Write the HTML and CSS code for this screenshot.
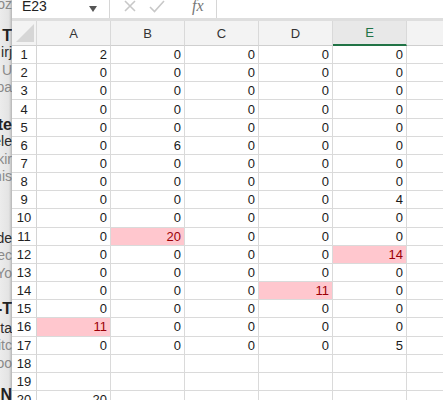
FILE: index.html
```html
<!DOCTYPE html>
<html>
<head>
<meta charset="utf-8">
<link rel="stylesheet" href="styles.css">
</head>
<body>
<div class="page">
  <div class="behind">
    <div class="bl gray first">oz</div>
    <div class="bl bold m13">T</div>
    <div class="bl">irj</div>
    <div class="bl gray">l U</div>
    <div class="bl gray">pa</div>
    <div class="bl bold m19">ste</div>
    <div class="bl">ele</div>
    <div class="bl gray">kir</div>
    <div class="bl gray">nis</div>
    <div class="bl m44">de</div>
    <div class="bl gray">tec</div>
    <div class="bl gray">Yo</div>
    <div class="bl bold m18">-T</div>
    <div class="bl m2">ta</div>
    <div class="bl gray">itc</div>
    <div class="bl gray">oo</div>
    <div class="bl bold m14">N</div>
  </div>
  <div class="window">
    <div class="fbar">
      <div class="namebox">
        <span class="name">E23</span>
        <svg class="caret" width="8" height="6" viewBox="0 0 8 6"><path d="M0 0h8L4 6z" fill="#555"/></svg>
      </div>
      <div class="fbtns">
        <svg width="14" height="13" viewBox="0 0 14 13"><path d="M2 1l10 10M12 1L2 11" stroke="#c8c8c8" stroke-width="1.6" fill="none"/></svg>
        <svg width="16" height="13" viewBox="0 0 16 13"><path d="M1 7l4.5 4.5L15 1" stroke="#c8c8c8" stroke-width="1.6" fill="none"/></svg>
        <span class="fx">fx</span>
      </div>
      <div class="finput"></div>
    </div>
    <div class="sheet" id="sheet">
      <div class="hd corner"><svg width="20" height="20" viewBox="0 0 20 20"><path d="M19 1V19H1z" fill="#d6d6d6"/></svg></div>
      <div class="hd">A</div>
      <div class="hd">B</div>
      <div class="hd">C</div>
      <div class="hd">D</div>
      <div class="hd sel">E</div>
      <div class="hd blank"></div>
    </div>
  </div>
</div>
<script src="app.js"></script>
</body>
</html>
```
FILE: styles.css
```css
html, body {
  margin: 0;
  padding: 0;
  background: #fff;
  overflow: hidden;
}
.page {
  display: flex;
  width: 443px;
  height: 400px;
  overflow: hidden;
  font-family: "Liberation Sans", Arial, sans-serif;
}
.behind {
  width: 12px;
  flex: none;
  overflow: hidden;
  background: linear-gradient(to right, #ececec 0%, #e4e4e4 70%, #cfcfcf 100%);
  display: flex;
  flex-direction: column;
  font-size: 14px;
  color: #2a2a2a;
}
.bl {
  height: 17.5px;
  line-height: 17.5px;
  display: flex;
  justify-content: flex-end;
  white-space: nowrap;
  flex: none;
}
.bl.gray { color: #8a8a8a; }
.bl.bold { font-weight: bold; font-size: 16px; color: #222; }
.first { margin-top: -4px; }
.m13 { margin-top: 13px; }
.m19 { margin-top: 19px; }
.m44 { margin-top: 44px; }
.m18 { margin-top: 18px; }
.m14 { margin-top: 14px; }
.m2 { margin-top: 2px; }

.window {
  flex: 1;
  display: flex;
  flex-direction: column;
  box-shadow: -1px 0 2px rgba(0,0,0,0.15);
  position: relative;
}
.fbar {
  flex: none;
  height: 18px;
  display: flex;
  border-bottom: 3px solid #dedede;
  background: #fff;
}
.namebox {
  width: 98px;
  display: flex;
  align-items: center;
  justify-content: space-between;
  padding: 0 12px 0 10px;
  box-sizing: border-box;
  border-right: 1px solid #d6d6d6;
}
.name {
  font-size: 14px;
  color: #222;
  line-height: 14px;
  margin-top: -6px;
}
.caret { margin-top: -1px; }
.fbtns {
  width: 107px;
  display: flex;
  align-items: center;
  padding-left: 13px;
  gap: 12px;
  box-sizing: border-box;
  border-right: 1px solid #d6d6d6;
}
.fbtns svg { margin-top: -5px; }
.fx {
  font-family: "Liberation Serif", "Times New Roman", serif;
  font-style: italic;
  font-size: 16px;
  color: #777;
  margin-left: 15px;
  margin-top: -6px;
}
.finput { flex: 1; }

.sheet {
  flex: none;
  display: grid;
  grid-template-columns: 25px repeat(5, 74px) 1fr;
  grid-template-rows: 25px;
  grid-auto-rows: 18.17px;
  font-size: 13px;
  color: #1a1a1a;
}
.hd {
  background: #f3f3f3;
  border-right: 1px solid #d9d9d9;
  border-bottom: 1px solid #cfcfcf;
  display: flex;
  align-items: center;
  justify-content: center;
  color: #333;
  box-sizing: border-box;
}
.hd.corner {
  justify-content: flex-end;
  align-items: flex-end;
  padding: 0 1px 2px 0;
}
.hd.sel {
  background: #e8e8e8;
  color: #217346;
  border-bottom: 2px solid #217346;
}
.hd.blank { border-right: none; }
.rh {
  background: #fff;
  border-right: 1px solid #d4d4d4;
  border-bottom: 1px solid #dadada;
  display: flex;
  align-items: center;
  justify-content: center;
  color: #222;
  box-sizing: border-box;
}
.c {
  border-right: 1px solid #dadada;
  border-bottom: 1px solid #dadada;
  display: flex;
  align-items: center;
  justify-content: flex-end;
  padding-right: 3px;
  box-sizing: border-box;
}
.c.last { border-right: none; }
.c.bad {
  background: #ffc7ce;
  color: #9c0006;
}
```
FILE: app.js
```js
var data = [
  [2,0,0,0,0],[0,0,0,0,0],[0,0,0,0,0],[0,0,0,0,0],[0,0,0,0,0],
  [0,6,0,0,0],[0,0,0,0,0],[0,0,0,0,0],[0,0,0,0,4],[0,0,0,0,0],
  [0,20,0,0,0],[0,0,0,0,14],[0,0,0,0,0],[0,0,0,11,0],[0,0,0,0,0],
  [11,0,0,0,0],[0,0,0,0,5],["","","","",""],["","","","",""],[20,"","","",""]
];
var bad = {"10-1":1,"11-4":1,"13-3":1,"15-0":1};
var sheet = document.getElementById("sheet");
data.forEach(function(row, r) {
  var h = document.createElement("div");
  h.className = "rh";
  h.textContent = r + 1;
  sheet.appendChild(h);
  row.forEach(function(v, c) {
    var d = document.createElement("div");
    d.className = "c" + (bad[r + "-" + c] ? " bad" : "");
    d.textContent = v;
    sheet.appendChild(d);
  });
  var e = document.createElement("div");
  e.className = "c last";
  sheet.appendChild(e);
});
```
